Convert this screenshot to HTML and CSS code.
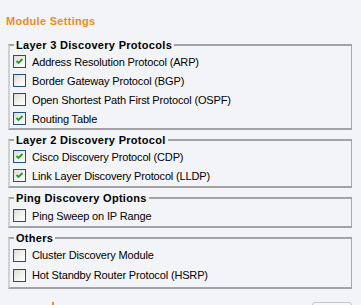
FILE: index.html
```html
<!DOCTYPE html>
<html>
<head>
<meta charset="utf-8">
<link rel="stylesheet" href="styles.css">
</head>
<body>
<div class="page">
  <h1 class="title">Module Settings</h1>

  <fieldset class="group l3">
    <legend>Layer 3 Discovery Protocols</legend>
    <label class="row"><span class="cb on"><svg viewBox="0 0 11 11"><path d="M2.5 5 L4.5 7 L8.5 3"/></svg></span>Address Resolution Protocol (ARP)</label>
    <label class="row"><span class="cb"></span>Border Gateway Protocol (BGP)</label>
    <label class="row"><span class="cb"></span>Open Shortest Path First Protocol (OSPF)</label>
    <label class="row"><span class="cb on"><svg viewBox="0 0 11 11"><path d="M2.5 5 L4.5 7 L8.5 3"/></svg></span>Routing Table</label>
  </fieldset>

  <fieldset class="group">
    <legend>Layer 2 Discovery Protocol</legend>
    <label class="row"><span class="cb on"><svg viewBox="0 0 11 11"><path d="M2.5 5 L4.5 7 L8.5 3"/></svg></span>Cisco Discovery Protocol (CDP)</label>
    <label class="row"><span class="cb on"><svg viewBox="0 0 11 11"><path d="M2.5 5 L4.5 7 L8.5 3"/></svg></span>Link Layer Discovery Protocol (LLDP)</label>
  </fieldset>

  <fieldset class="group ping">
    <legend>Ping Discovery Options</legend>
    <label class="row"><span class="cb"></span>Ping Sweep on IP Range</label>
  </fieldset>

  <fieldset class="group others">
    <legend>Others</legend>
    <label class="row"><span class="cb"></span>Cluster Discovery Module</label>
    <label class="row"><span class="cb"></span>Hot Standby Router Protocol (HSRP)</label>
  </fieldset>

  <div class="footer">
    <span class="mark"></span>
    <span class="btn"></span>
  </div>
</div>
</body>
</html>
```
FILE: styles.css
```css
html, body {
  margin: 0;
  padding: 0;
  background: #f3f4f7;
}
body {
  font-family: "Liberation Sans", Arial, sans-serif;
  font-size: 11px;
  color: #000;
  overflow: hidden;
}
.page {
  padding: 15px 9px 0 8px;
  height: 305px;
  box-sizing: border-box;
  overflow: hidden;
}
.title {
  margin: 0 0 10px -2px;
  font-size: 11px;
  line-height: 13px;
  font-weight: bold;
  letter-spacing: 0.3px;
  color: #ec8b22;
}
.group {
  margin: 0 0 3px 0;
  padding: 0 0 1px 3px;
  border-style: solid;
  border-width: 2px 1px 2px 2px;
  border-color: #a3a3a6 #a8a8ab #a3a3a6 #cfd0d4;
  min-width: 0;
}
.group legend {
  margin-left: 1px;
  padding: 0 2px;
  font-weight: bold;
  font-size: 11px;
  line-height: 14px;
  letter-spacing: 0.3px;
}
.l3 {
  padding-bottom: 0;
}
.ping .row {
  margin-top: 1px;
}
.others .row {
  height: 20px;
}
.others {
  padding-bottom: 2px;
}
.row {
  display: flex;
  align-items: center;
  height: 19px;
  white-space: nowrap;
  letter-spacing: -0.15px;
}
.cb {
  box-sizing: border-box;
  width: 13px;
  height: 13px;
  border: 1px solid #1c5180;
  background: linear-gradient(135deg, #dcdcd5 0%, #f4f4f0 60%, #ffffff 100%);
  margin-right: 6px;
  flex: none;
  display: flex;
}
.cb svg {
  width: 11px;
  height: 11px;
}
.cb svg path {
  fill: none;
  stroke: #21a121;
  stroke-width: 1.9;
}
.footer {
  display: flex;
  justify-content: space-between;
  margin-top: 13px;
}
.mark {
  width: 2px;
  height: 3px;
  background: #ec8b22;
  margin-left: 44px;
}
.btn {
  width: 40px;
  height: 20px;
  box-sizing: border-box;
  border: 1px solid #c4c4c8;
  border-radius: 3px;
  background: #f8f8fa;
}
```
